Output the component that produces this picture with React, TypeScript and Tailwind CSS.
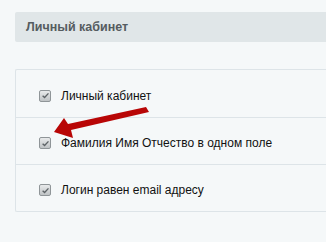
import * as React from "react";

const OPTIONS = [
  "Личный кабинет",
  "Фамилия Имя Отчество в одном поле",
  "Логин равен email адресу",
];

function FakeCheckbox() {
  return (
    <span className="flex h-[12px] w-[12px] shrink-0 items-center justify-center rounded-[2px] border border-[#8f9598] bg-gradient-to-b from-[#e8eaeb] to-[#bfc3c5]">
      <svg viewBox="0 0 10 10" className="h-[9px] w-[9px]" aria-hidden>
        <path d="M1.8 5.2 L4 7.3 L8.3 2.6" fill="none" stroke="#5d6366" strokeWidth="1.5" />
      </svg>
    </span>
  );
}

export default function App() {
  return (
    <div
      className="relative h-[242px] w-[326px] overflow-hidden bg-[#f5f8f9]"
      style={{ fontFamily: '"Liberation Sans", Arial, sans-serif' }}
    >
      <div className="pl-[15px] pt-[12px]">
        <div className="flex h-[30px] items-center rounded-l-[2px] bg-[#e0e6e8] pl-[11px] text-[12.5px] font-bold text-[#555c60]">
          Личный кабинет
        </div>
      </div>

      <div className="ml-[15px] mt-[27px] rounded-l-[2px] border-y border-l border-[#dde4e8]">
        {OPTIONS.map((label, i) => (
          <div
            key={label}
            className={`flex h-[47px] items-center gap-[10px] pl-[23px] pt-[4px] text-[12px] text-[#111] ${
              i > 0 ? "border-t border-[#dde4e8]" : ""
            }`}
          >
            <FakeCheckbox />
            <span>{label}</span>
          </div>
        ))}
      </div>

      <svg
        className="pointer-events-none absolute left-0 top-0"
        width="326"
        height="242"
        viewBox="0 0 326 242"
        aria-hidden
      >
        <path
          d="M146 107 L149 112 L71 130 L73 138 L54 132 L64 118 L68 124 Z"
          fill="#b80606"
        />
      </svg>
    </div>
  );
}
